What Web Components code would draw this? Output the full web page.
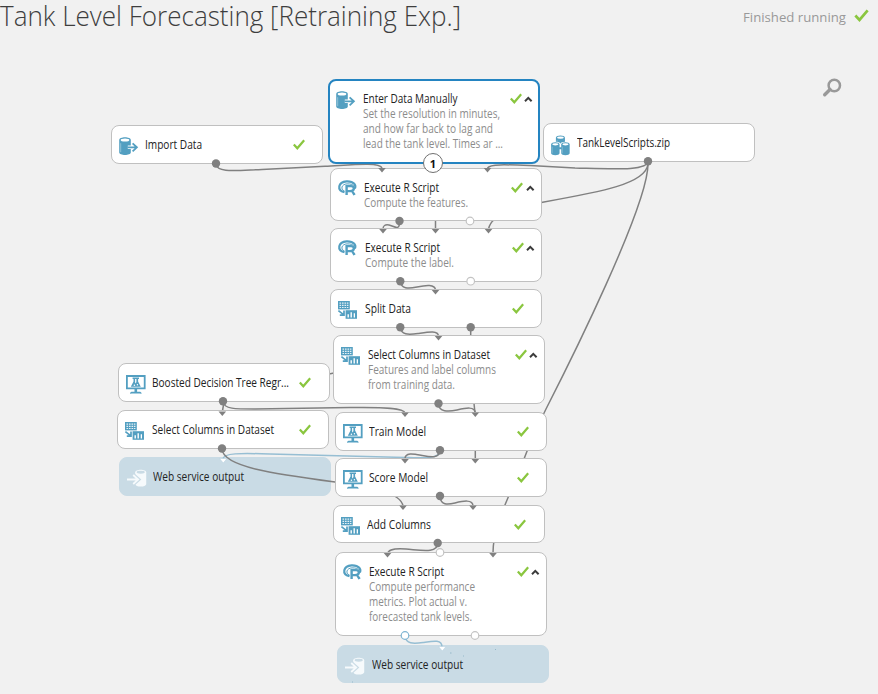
<!DOCTYPE html>
<html lang="en">
<head>
<meta charset="utf-8">
<title>Tank Level Forecasting</title>
<style>
html,body{margin:0;height:100%;background:#f1f1f1;overflow:hidden}
body{font-family:"Open Sans","Noto Sans",sans-serif;color:#333}
</style>
</head>
<body>
<experiment-page></experiment-page>
<script>
/* Text run squeezed horizontally to a given width. */
class FitText extends HTMLElement{
  connectedCallback(){
    const r=this.attachShadow({mode:'open'});
    r.innerHTML='<style>:host{display:block;white-space:nowrap;line-height:inherit}span{display:inline-block;transform-origin:0 50%}</style><span><slot></slot></span>';
    const s=r.querySelector('span'),w=+this.getAttribute('w');
    const n=s.offsetWidth;
    if(n)s.style.transform='scaleX('+w/s.getBoundingClientRect().width+')';
  }
}
const mon='<path d="M.9 1h17.800v12.400H.9z" fill="none" stroke="currentColor" stroke-width="1.800"/><path d="M9.800 14v4" stroke="currentColor" stroke-width="2.600"/><path d="M4 18.700c0-1.400 1-2 2.400-2h6.800c1.400 0 2.400.6 2.400 2l-2-.3H6z" fill="currentColor"/><path d="M6.600 2.600h6.400v1.300h-.9v2.700l2.700 5.200H4.800l2.700-5.200V3.900h-.9z" fill="currentColor"/><path d="M9.100 4.100h1.300v3.100L9.100 8.600z" fill="#fff"/><circle cx="8.400" cy="10.300" r=".8" fill="#fff"/><circle cx="11.400" cy="9.800" r=".7" fill="#fff"/>';
const grid='<path d="M0 0h11.800v8.400H0z" fill="currentColor"/><path d="M1.500 1.500h1.600v1.200H1.500zm2.500 0h1.600v1.200H4zm2.500 0h1.600v1.200H6.500zm2.400 0h1.500v1.200H8.900zM1.500 3.700h1.600v1.200H1.500zm2.500 0h1.600v1.200H4zm2.500 0h1.600v1.200H6.500zm2.400 0h1.500v1.200H8.900zM1.500 5.900h1.600v1.200H1.500zm2.500 0h1.600v1.200H4zm2.500 0h1.600v1.200H6.500zm2.400 0h1.500v1.200H8.900z" fill="#fff" fill-opacity=".85"/><path d="M.4 9.600l4.800 3.800M6 9.600v4.500H1.800" fill="none" stroke="currentColor" stroke-width="1.700"/><path d="M7.600 9.200h11.400v8.600H7.600z" fill="currentColor"/><path d="M9.500 13.300h1.400v3.200H9.500zm3-2h1.400v5.200h-1.400zm3.200 1h1.300v4.200h-1.300z" fill="#fff"/>';
const cyl=(x,y,s)=>`<g transform="translate(${x} ${y}) scale(${s})"><path d="M0 3C0-.8 11.600-.8 11.600 3v12.200c0 3.600-11.600 3.600-11.600 0z" fill="currentColor"/><ellipse cx="5.800" cy="2.900" rx="4.300" ry="1.500" fill="var(--hole,#fff)"/><path d="M1.500 6.200v9" stroke="#fff" stroke-opacity=".35"/></g>`;
const ICONS={
  data:cyl(.2,0,1)+'<path d="M8.800 10.300h9M13.600 6.300l4.300 4-4.300 4" fill="none" stroke="#fff" stroke-width="3.400"/><path d="M8.500 10.300h9.500M13.600 6.300l4.300 4-4.300 4" fill="none" stroke="currentColor" stroke-width="1.800"/>',
  zip:cyl(4.900,.3,.78)+'<path d="M-.3 9.300c0-3.300 9.700-3.300 9.700-.5 0-2.800 10-2.800 10 .5v3H-.3z" fill="#fff"/>'+cyl(.1,7.200,.73)+cyl(10.200,7.200,.73),
  r:'<path d="M6.500 12.300C-1.500 10.500 0 1.800 8.600 1.300c8-.3 9.600 4.500 8.300 7.200" fill="none" stroke="currentColor" stroke-width="2.200"/><path d="M6.500 11C2 9.400 3.700 4 9 3.900c3.500-.1 5.500.5 6.500 1.600" fill="none" stroke="currentColor" stroke-width="1"/><path d="M8.600 15V6.100h4.400c3.800 0 3.600 4.300.5 4.900 1.300.5 2 2.300 3 4M9 11.100h4" fill="none" stroke="currentColor" stroke-width="2.400"/>',
  grid:grid,model:mon,
  out:cyl(8.200,.5,.95)+'<path d="M1 10.500h10M6.800 6.500l4.500 4-4.500 4" fill="none" stroke="#c9dbe5" stroke-width="4"/><path d="M0 10.500h10.800M6.200 6l5 4.500-5 4.500" fill="none" stroke="currentColor" stroke-width="1.800"/>'
};
class StatusCheck extends HTMLElement{
  connectedCallback(){
    this.attachShadow({mode:'open'}).innerHTML='<style>:host{display:block;width:12px;height:11px}svg{display:block;width:100%;height:100%}</style><svg viewBox="0 0 12 11"><path d="M.8 5.500l3.500 3.700L11.200 1.200" fill="none" stroke="#8ac63f" stroke-width="2.300"/></svg>';
  }
}
class FlowNode extends HTMLElement{
  connectedCallback(){
    const a=k=>this.getAttribute(k),out=a('icon')==='out';
    const r=this.attachShadow({mode:'open'});
    r.innerHTML=`<style>
    :host{position:absolute;left:${a('x')}px;top:${a('y')}px;width:212px;height:${a('h')}px;box-sizing:border-box;display:grid;grid-template-columns:26.300px 147.200px 14.500px 1fr;padding:11px 0 0 7px;border:1px solid #c0c0c0;border-radius:8px;background:#fff;font-size:12px;line-height:15px;color:#222}
    :host([selected]){border:2px solid #2484c1;padding:10px 0 0 6.300px}
    :host([icon=out]){background:#c9dbe5;border-color:#c9dbe5;--hole:#c9dbe5}
    .i{width:20px;height:20px;color:${out?'#f6fafc':'#539fc1'};overflow:visible}
    ::slotted([slot=desc]){color:#8c8c8c}
    status-check{margin-top:2px}
    .c{width:9px;height:6px;margin-top:5px;overflow:visible}
    </style><svg class="i" viewBox="0 0 20 20">${ICONS[a('icon')]}</svg><div><slot></slot><slot name="desc"></slot></div>
    ${a('check')===null?'':'<status-check></status-check>'}${a('open')===null?'':'<svg class="c" viewBox="0 0 9 6"><path d="M1 5.300l3.300-3.400 3.300 3.400" fill="none" stroke="#3c3c3c" stroke-width="2"/></svg>'}`;
  }
}
class FlowEdges extends HTMLElement{
  connectedCallback(){
    const g='#808080',b='#96bed3';
    const lines=[
    [g,'M216 164C217 173 235 170.500 262 169.500L325 166.300C350 165 380 161.500 382 168'],
    [g,'M648 161C648 171 615 169 575 168L530 165.600C505 164.500 490 164 487.500 168'],
    [g,'M648 164C646 184 600 192 541 202.500C510 208 491 216 488.500 229'],
    [g,'M648 164C648 206 570 362 546 409C532 436 528 449 524 459L512 488C503 510 493 530 493 553'],
    [g,'M399.500 221C400 232 394 226 389 225Q383 224 383 229'],
    [g,'M435.500 221V229'],
    [g,'M400.300 281C401 289 408 289 417 287S435 284 435.500 290'],
    [g,'M400.300 327C401 335 408 335 418 333.500S438 330 438.500 336'],
    [g,'M470.700 327V340'],[g,'M329 374L334 373'],[g,'M474 403.500L475 413'],
    [g,'M438.500 404C439 412 448 412 457 410S475 406 475.300 413'],
    [g,'M224 402L222.300 412'],
    [g,'M223 402C224 409 235 409 255 409L350 407.500C385 407 404 408 405 413'],
    [b,'M440 451C440 459 423 458 405 457.500L270 454C240 453 223 453 223 459'],
    [g,'M440 450C440 459 430 457 422 455.500S405 452 405 459'],
    [g,'M475.300 450V459'],
    [g,'M222 449C223 467 275 474 335 482C375 488 401 493 403 506'],
    [g,'M440 497C441 505 447 505 455 503S473 499 473 506'],
    [g,'M437.700 543C438 554 420 550 406 549S388 550 387.500 554'],
    [b,'M405 636C406 644 413 644 423 642.500S442 639 442 647']];
    const arrows=[[382,168],[487.5,168],[383,229],[435.5,229],[488.5,229],[435.5,290],[438.5,336],[222.3,411.500],[405,412.500],[475.3,412.500],[405,459],[475.3,459],[403,505.500],[473,505.500],[387.5,553],[493,553]];
    const full=[[216,163.500],[648,161.300],[399.5,221],[400.3,281.200],[400.3,327.300],[470.7,327.300],[438.5,403.500],[223,401.300],[222,448.500],[440,450.300],[440,496],[437.7,543]];
    const hollow=[[470,221,'#c3c3c3'],[470.7,281.200,'#c3c3c3'],[440,552.500,'#c3c3c3'],[405,635.500,'#7db4d2'],[475,635.500,'#c3c3c3']];
    const top=this.hasAttribute('ports');
    this.attachShadow({mode:'open'}).innerHTML='<style>:host{position:absolute;inset:0;pointer-events:none}svg{display:block;width:878px;height:694px}</style><svg viewBox="0 0 878 694">'+(top?
      arrows.map(([x,y])=>`<path d="M${x-3.8} ${y}h7.600l-3.800 4.600z" fill="${g}"/>`).join('')+
      `<path d="M219.500 458.500h7.500l-3.700 4.500zM438.500 646.500h7.500l-3.700 4.500z" fill="#fff" stroke="#b4cfde" stroke-width=".5"/>`+
      full.map(([x,y])=>`<circle cx="${x}" cy="${y}" r="4.200" fill="${g}"/>`).join('')+
      hollow.map(([x,y,c])=>`<circle cx="${x}" cy="${y}" r="3.800" fill="#fff" stroke="${c}" stroke-width="1.200"/>`).join('')+
      '<path d="M450 653h1.500M463 656h1M495 649.500h1M352 682h1" stroke="#96b9ca"/>'
      :lines.map(([c,d])=>`<path d="${d}" fill="none" stroke="${c}" stroke-width="1.500"/>`).join(''))+'</svg>';
  }
}
class StepBadge extends HTMLElement{
  connectedCallback(){
    this.attachShadow({mode:'open'}).innerHTML='<style>:host{position:absolute;left:423px;top:153px;width:20px;height:20px;box-sizing:border-box;display:grid;place-items:center;border:1.500px solid #707070;border-radius:50%;background:#fff;color:#111;font:bold 11px/1 "Open Sans",sans-serif}</style><slot></slot>';
  }
}
class PageHeader extends HTMLElement{
  connectedCallback(){
    this.attachShadow({mode:'open'}).innerHTML=`<style>:host{display:flex;justify-content:space-between;align-items:flex-start;height:40px}
    .t{font-size:27.500px;font-weight:300;line-height:38px;margin:-3px 0 0;width:470px;color:#3e3e3e}
    .s{display:flex;gap:8px;width:135px;font-size:13px;line-height:18px;color:#999;margin-top:8px}
    .s fit-text{width:103px}status-check{width:15px;height:13px;margin-top:1px}</style>
    <div class="t"><fit-text w="461">Tank Level Forecasting [Retraining Exp.]</fit-text></div>
    <div class="s"><fit-text w="103">Finished running</fit-text><status-check></status-check></div>`;
  }
}
class ExperimentPage extends HTMLElement{
  connectedCallback(){
    const n=(icon,x,y,h,t,w,flags='',desc=[])=>`<flow-node icon="${icon}" x="${x}" y="${y}" h="${h}" ${flags}><fit-text w="${w}">${t}</fit-text>${desc.map(([d,q])=>`<fit-text slot="desc" w="${q}">${d}</fit-text>`).join('')}</flow-node>`;
    this.attachShadow({mode:'open'}).innerHTML=`<style>:host{display:block;position:relative;width:878px;height:694px;overflow:hidden;background:#f1f1f1}
    .z{position:absolute;left:822px;top:78px;width:20px;height:20px}</style>
    <page-header></page-header>
    <svg class="z" viewBox="0 0 20 20"><circle cx="12.300" cy="7.500" r="5.700" fill="none" stroke="#999" stroke-width="2.500"/><path d="M8 11.500l-5.300 5.300" stroke="#999" stroke-width="3.400" stroke-linecap="round"/></svg>`+
    n('out',119,457.4,38.5,'Web service output',91)+n('out',337.4,645,38,'Web service output',91)+
    '<flow-edges></flow-edges>'+
    n('data',111.2,125.4,38.4,'Import Data',57,'check')+
    n('zip',543.2,123.4,38.4,'TankLevelScripts.zip',93)+
    n('r',330,168,53,'Execute R Script',75,'check open',[['Compute the features.',104]])+
    n('data',328.2,79.3,84.500,'Enter Data Manually',94.5,'check open selected',[['Set the resolution in minutes,',137],['and how far back to lag and',130],['lead the tank level. Times ar ...',140]])+
    n('r',330.45,228.3,53.4,'Execute R Script',75,'check open',[['Compute the label.',89]])+
    n('grid',330.45,289.3,38.4,'Split Data',46,'check')+
    n('grid',333.45,335.3,68.4,'Select Columns in Dataset',122,'check open',[['Features and label columns',128],['from training data.',87]])+
    n('model',118,363.3,38.4,'Boosted Decision Tree Regr...',137,'check')+
    n('grid',117.3,410.4,38.4,'Select Columns in Dataset',122,'check')+
    n('model',335.1,412.2,38.4,'Train Model',57,'check')+
    n('model',335.1,458.2,38.4,'Score Model',59,'check')+
    n('grid',333,505,38,'Add Columns',64,'check')+
    n('r',335.1,552.3,83.4,'Execute R Script',75,'check open',[['Compute performance',106],['metrics. Plot actual v.',98],['forecasted tank levels.',103]])+
    '<flow-edges ports></flow-edges><step-badge>1</step-badge>';
  }
}
customElements.define('status-check',StatusCheck);
customElements.define('flow-node',FlowNode);
customElements.define('flow-edges',FlowEdges);
customElements.define('step-badge',StepBadge);
customElements.define('page-header',PageHeader);
customElements.define('experiment-page',ExperimentPage);
customElements.define('fit-text',FitText);
</script>
</body>
</html>
